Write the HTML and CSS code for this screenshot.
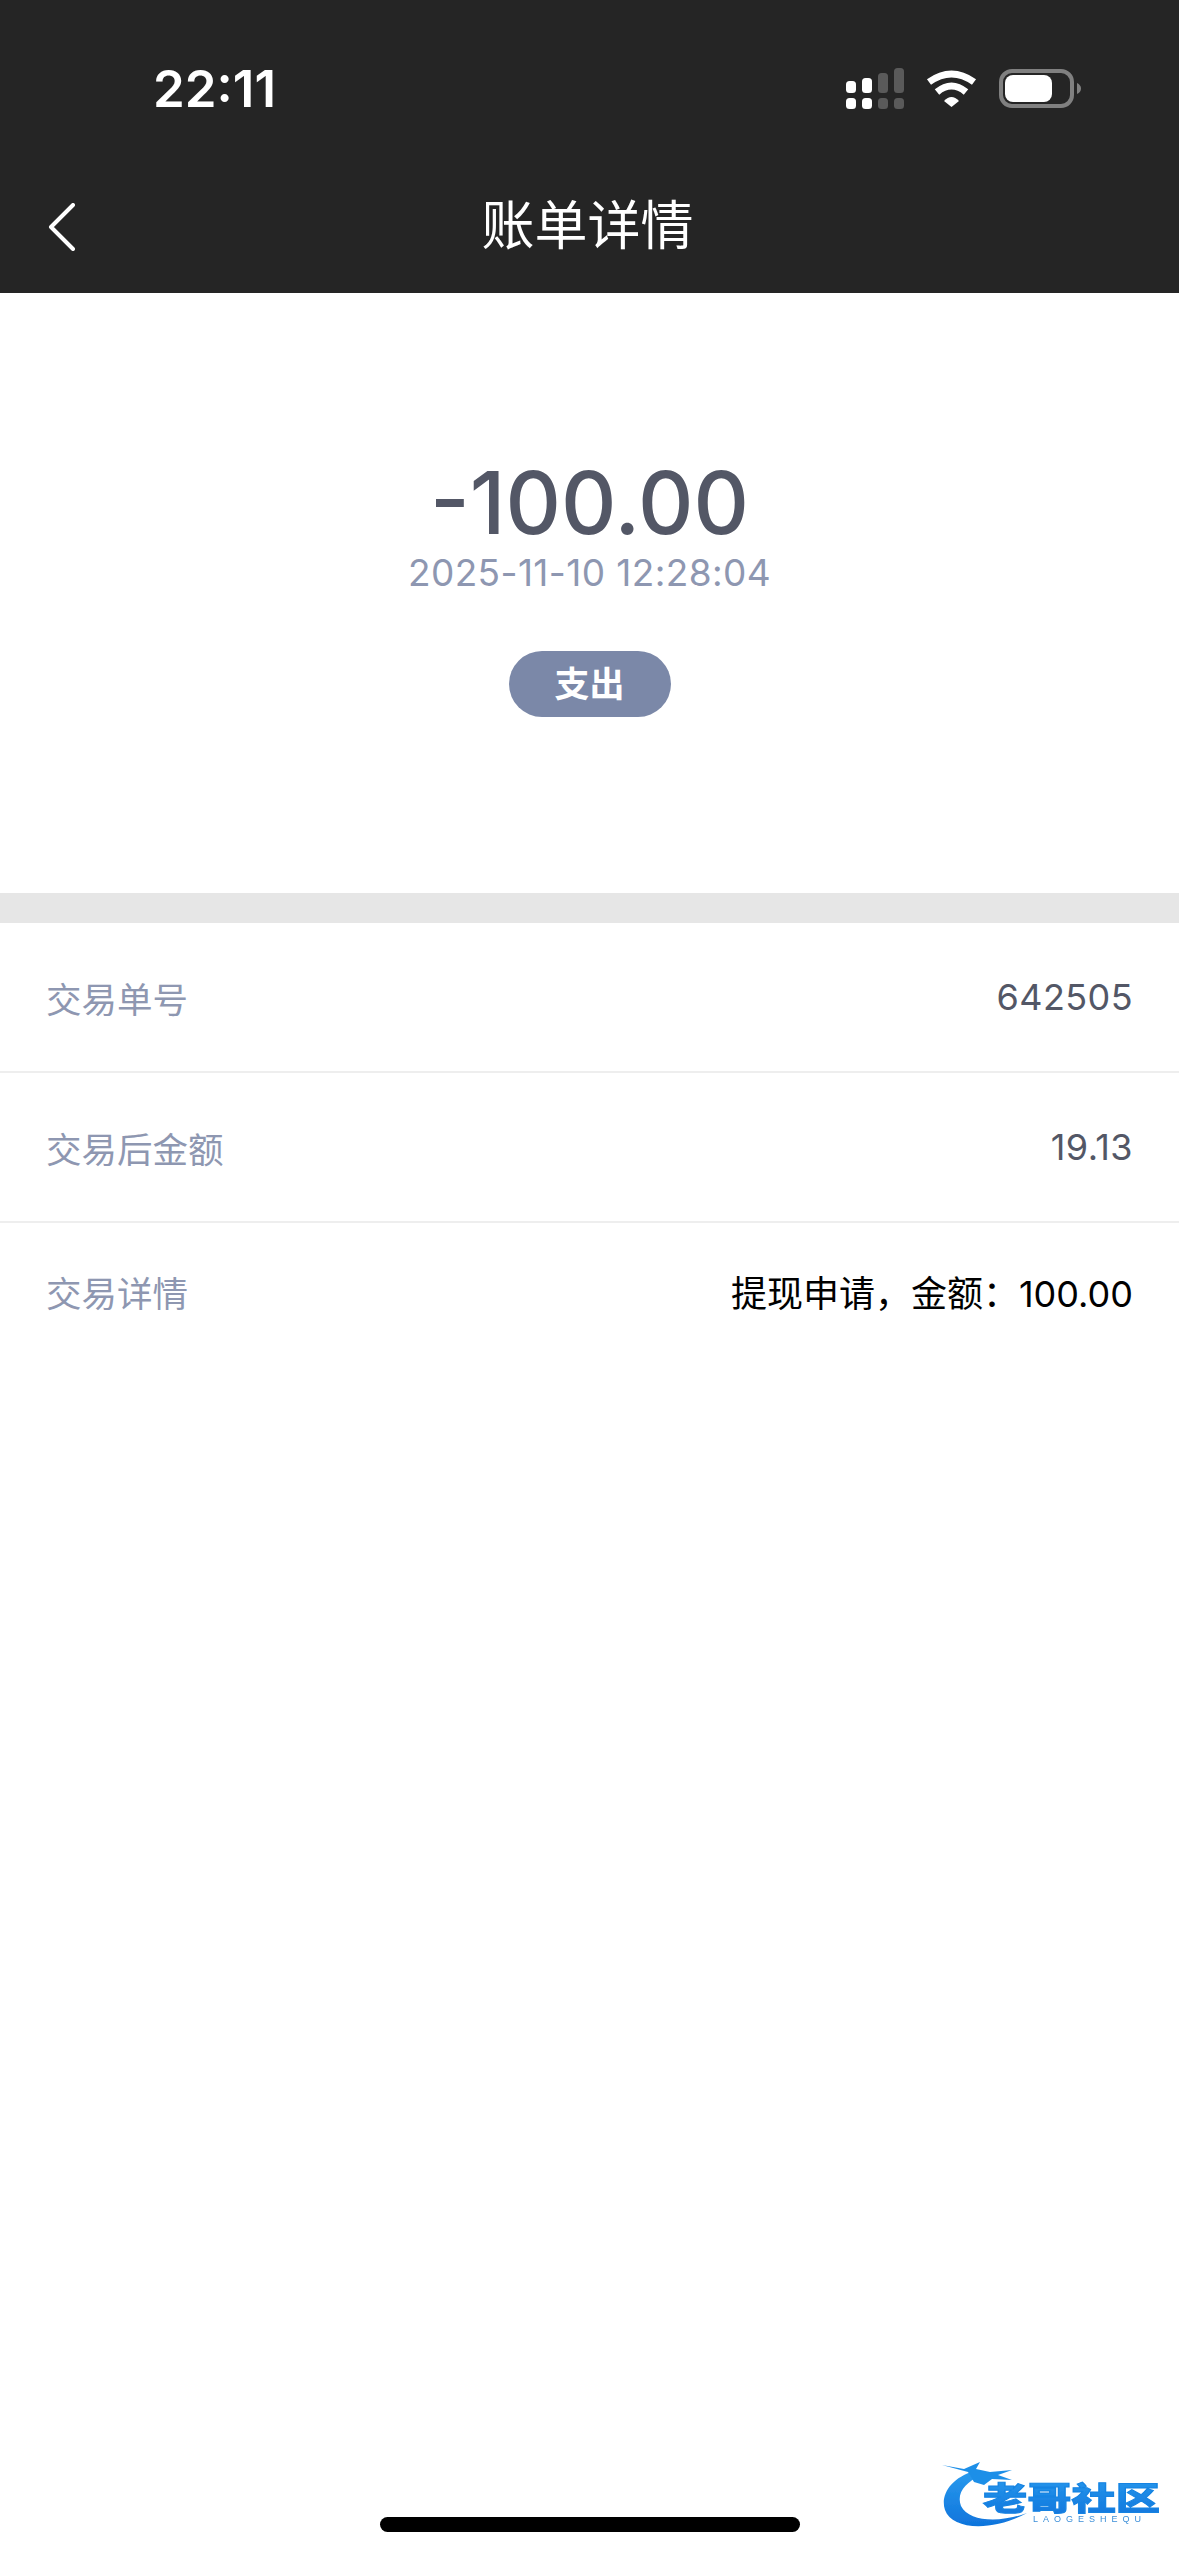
FILE: index.html
```html
<!DOCTYPE html>
<html lang="zh-CN">
<head>
    <meta charset="UTF-8">
    <meta name="viewport" content="width=device-width, initial-scale=1">
    <title>账单详情</title>
    <link rel="stylesheet" href="styles.css">
</head>
<body>
    <div class="page">
        <!-- Dark header: status bar and nav -->
        <header class="header">
            <div class="status-bar">
                <span class="time">22:11</span>
                <div class="status-icons">
                    <svg class="icon-signal" width="58" height="41" viewBox="0 0 58 41">
                        <rect x="0" y="13" width="10" height="12" rx="3.5" fill="#fff"/>
                        <rect x="16" y="10" width="10" height="15" rx="3.5" fill="#fff"/>
                        <rect x="32" y="5" width="10" height="20" rx="3.5" fill="#5a5a5a"/>
                        <rect x="48" y="0" width="10" height="25" rx="3.5" fill="#5a5a5a"/>
                        <rect x="0" y="30" width="10" height="11" rx="3.5" fill="#fff"/>
                        <rect x="16" y="30" width="10" height="11" rx="3.5" fill="#fff"/>
                        <rect x="32" y="30" width="10" height="11" rx="3.5" fill="#5a5a5a"/>
                        <rect x="48" y="30" width="10" height="11" rx="3.5" fill="#5a5a5a"/>
                    </svg>
                    <svg class="icon-wifi" width="51" height="37" viewBox="0 0 51 37">
                        <path d="M3 12Q25.500-4 48 12" fill="none" stroke="#fff" stroke-width="7"/>
                        <path d="M11 22Q25.500 10 40 22" fill="none" stroke="#fff" stroke-width="7"/>
                        <path d="M18 31Q25.500 23 33 31L25.500 37Z" fill="#fff"/>
                    </svg>
                    <svg class="icon-battery" width="82" height="39" viewBox="0 0 82 39">
                        <rect x="2" y="2" width="71" height="35" rx="11" fill="none" stroke="#808080" stroke-width="4"/>
                        <rect x="6" y="6" width="47" height="27" rx="8" fill="#fff"/>
                        <path d="M78 14Q82 16 82 19.500Q82 23 78 25Z" fill="#808080"/>
                    </svg>
                </div>
            </div>
            <nav class="nav-bar">
                <svg class="icon-back" width="27" height="48" viewBox="0 0 27 48">
                    <path d="M25 2L3 24L25 46" fill="none" stroke="#fff" stroke-width="4" stroke-linecap="round" stroke-linejoin="round"/>
                </svg>
                <h1 class="nav-title">账单详情</h1>
            </nav>
        </header>

        <!-- Amount summary -->
        <section class="summary">
            <div class="amount">-100.00</div>
            <div class="date">2025-11-10 12:28:04</div>
            <div class="tag">支出</div>
        </section>

        <div class="band"></div>

        <!-- Transaction rows -->
        <section class="rows">
            <div class="row">
                <span class="row-label">交易单号</span>
                <span class="row-value">642505</span>
            </div>
            <div class="row">
                <span class="row-label">交易后金额</span>
                <span class="row-value">19.13</span>
            </div>
            <div class="row row-last">
                <span class="row-label">交易详情</span>
                <span class="row-value row-value-dark">提现申请，金额：100.00</span>
            </div>
        </section>

        <!-- Watermark logo -->
        <svg class="logo" width="230" height="72" viewBox="0 0 230 72">
            <defs>
                <linearGradient id="logoBlue" x1="0" y1="0" x2="0" y2="1">
                    <stop offset="0" stop-color="#2a9bee"/>
                    <stop offset="1" stop-color="#0f74dc"/>
                </linearGradient>
                <filter id="soft"><feGaussianBlur stdDeviation="0.6"/></filter>
            </defs>
            <g filter="url(#soft)">
                <path d="M34 11C11 18 0 35 5 50C12 70 52 72 87 53C60 63 29 62 21 46C16 33 26 22 40 16Z" fill="url(#logoBlue)"/>
                <path d="M2 5L24 9L40 2L36 9L50 12L72 10L58 15L72 20L52 19L44 25L34 22L28 12Z" fill="#1f8fe8"/>
                <text class="logo-name" x="43" y="50" textLength="177" lengthAdjust="spacingAndGlyphs" fill="url(#logoBlue)" stroke="#1583e2" stroke-width="1">老哥社区</text>
                <text class="logo-sub" x="93" y="62" textLength="108" fill="#3d8fd8">LAOGESHEQU</text>
            </g>
        </svg>

        <div class="home-indicator"></div>
    </div>
</body>
</html>
```

FILE: styles.css
```css
* {
    margin: 0;
    padding: 0;
    box-sizing: border-box;
}

body {
    font-family: Inter, "Noto Sans CJK SC", sans-serif;
    background-color: #ffffff;
}

.page {
    position: relative;
    width: 1179px;
    height: 2556px;
    overflow: hidden;
    background-color: #ffffff;
}

.header {
    height: 293px;
    background-color: #252525;
    color: #ffffff;
}

.status-bar {
    height: 160px;
    padding: 16px 98px 0 153px;
    display: flex;
    justify-content: space-between;
    align-items: center;
}

.time {
    font-size: 51px;
    font-weight: 600;
    line-height: 1;
}

.status-icons {
    display: flex;
    align-items: center;
    gap: 22px;
}

.nav-bar {
    position: relative;
    height: 133px;
    padding-right: 4px;
    display: flex;
    align-items: center;
    justify-content: center;
}

.icon-back {
    position: absolute;
    left: 48px;
    top: 43px;
}

.nav-title {
    font-size: 53px;
    font-weight: 400;
    line-height: 1;
}

.summary {
    padding: 165px 0 176px;
    display: flex;
    flex-direction: column;
    align-items: center;
}

.amount {
    font-size: 86px;
    font-weight: 500;
    line-height: 90px;
    color: #535766;
}

.date {
    margin-top: 3px;
    font-size: 37px;
    line-height: 44px;
    letter-spacing: 0.4px;
    color: #8e97b1;
}

.tag {
    width: 162px;
    height: 66px;
    margin-top: 56px;
    border-radius: 33px;
    background-color: #7b88a8;
    color: #ffffff;
    font-size: 35px;
    font-weight: 700;
    line-height: 66px;
    text-align: center;
}

.band {
    height: 30px;
    background-color: #e6e6e6;
}

.row {
    height: 150px;
    padding: 0 46px;
    display: flex;
    justify-content: space-between;
    align-items: center;
    border-bottom: 2px solid #eeeeee;
}

.row-last {
    height: 136px;
    border-bottom: none;
}

.row-label {
    font-size: 35.5px;
    color: #8e97b1;
}

.row-value {
    font-size: 36px;
    letter-spacing: 0.4px;
    color: #535766;
}

.row-value-dark {
    letter-spacing: 0;
    color: #000000;
}

.logo {
    position: absolute;
    left: 940px;
    top: 2460px;
}

.logo-name {
    font-family: "Noto Sans CJK SC", sans-serif;
    font-size: 32px;
    font-weight: 900;
}

.logo-sub {
    font-family: "Liberation Sans", sans-serif;
    font-size: 9px;
}

.home-indicator {
    position: absolute;
    left: 380px;
    top: 2517px;
    width: 420px;
    height: 15px;
    border-radius: 8px;
    background-color: #000000;
}
```
